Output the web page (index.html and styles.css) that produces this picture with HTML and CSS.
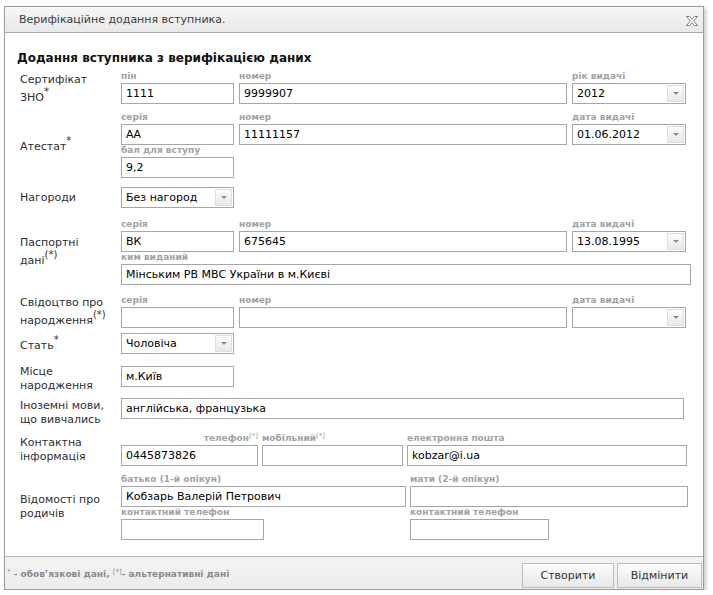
FILE: index.html
```html
<!DOCTYPE html>
<html lang="uk">
<head>
<meta charset="utf-8">
<title>Верифікаційне додання вступника</title>
<link rel="stylesheet" href="styles.css">
</head>
<body>
<div class="dialog">
  <div class="titlebar">
    <span class="title">Верифікаційне додання вступника.</span>
    <span class="close">
      <svg width="12" height="10" viewBox="0 0 12 10"><path d="M0.5 0.5H3.6L6 3.2L8.4 0.5H11.5L7.7 5L11.5 9.5H8.4L6 6.8L3.6 9.5H0.5L4.3 5Z" fill="#fff" stroke="#7d7d7d" stroke-width="1" stroke-linejoin="miter"/></svg>
    </span>
  </div>

  <div class="content">
    <h1 class="heading">Додання вступника з верифікацією даних</h1>
    <div class="form">

      <div class="row">
        <div class="label label-top">Сертифікат<br>ЗНО<sup>*</sup></div>
        <div class="fields">
          <div class="line">
            <div class="field w113"><div class="cap">пін</div><div class="input">1111</div></div>
            <div class="field w328"><div class="cap">номер</div><div class="input">9999907</div></div>
            <div class="field w114"><div class="cap">рік видачі</div><div class="select"><span class="select-text">2012</span><span class="select-btn"><i class="arrow"></i></span></div></div>
          </div>
        </div>
      </div>

      <div class="row mt7">
        <div class="label">Атестат<sup>*</sup></div>
        <div class="fields">
          <div class="line">
            <div class="field w113"><div class="cap">серія</div><div class="input">АА</div></div>
            <div class="field w328"><div class="cap">номер</div><div class="input">11111157</div></div>
            <div class="field w114"><div class="cap">дата видачі</div><div class="select"><span class="select-text">01.06.2012</span><span class="select-btn"><i class="arrow"></i></span></div></div>
          </div>
          <div class="line">
            <div class="field w113"><div class="cap">бал для вступу</div><div class="input">9,2</div></div>
          </div>
        </div>
      </div>

      <div class="row mt9">
        <div class="label">Нагороди</div>
        <div class="fields">
          <div class="select w113"><span class="select-text">Без нагород</span><span class="select-btn"><i class="arrow"></i></span></div>
        </div>
      </div>

      <div class="row mt11">
        <div class="label">Паспортні<br>дані<sup>(*)</sup></div>
        <div class="fields">
          <div class="line">
            <div class="field w113"><div class="cap">серія</div><div class="input">ВК</div></div>
            <div class="field w328"><div class="cap">номер</div><div class="input">675645</div></div>
            <div class="field w114"><div class="cap">дата видачі</div><div class="select"><span class="select-text">13.08.1995</span><span class="select-btn"><i class="arrow"></i></span></div></div>
          </div>
          <div class="line">
            <div class="field w570"><div class="cap">ким виданий</div><div class="input">Мінським РВ МВС України в м.Києві</div></div>
          </div>
        </div>
      </div>

      <div class="row mt10">
        <div class="label">Свідоцтво про<br>народження<sup>(*)</sup></div>
        <div class="fields">
          <div class="line">
            <div class="field w113"><div class="cap">серія</div><div class="input"></div></div>
            <div class="field w328"><div class="cap">номер</div><div class="input"></div></div>
            <div class="field w114"><div class="cap">дата видачі</div><div class="select"><span class="select-text"></span><span class="select-btn"><i class="arrow"></i></span></div></div>
          </div>
        </div>
      </div>

      <div class="row mt5">
        <div class="label">Стать<sup>*</sup></div>
        <div class="fields">
          <div class="select w113"><span class="select-text">Чоловіча</span><span class="select-btn"><i class="arrow"></i></span></div>
        </div>
      </div>

      <div class="row row-top mt11">
        <div class="label">Місце<br>народження</div>
        <div class="fields">
          <div class="input w113 nudge">м.Київ</div>
        </div>
      </div>

      <div class="row row-top mt5">
        <div class="label nudge">Іноземні мови,<br>що вивчались</div>
        <div class="fields">
          <div class="input w563">англійська, французька</div>
        </div>
      </div>

      <div class="row mt6">
        <div class="label">Контактна<br>інформація</div>
        <div class="fields">
          <div class="line tight">
            <div class="field w137"><div class="cap right">телефон<sup>[*]</sup></div><div class="input">0445873826</div></div>
            <div class="field w141"><div class="cap">мобільний<sup>[*]</sup></div><div class="input"></div></div>
            <div class="field w280"><div class="cap">електронна пошта</div><div class="input">kobzar@i.ua</div></div>
          </div>
        </div>
      </div>

      <div class="row mt8">
        <div class="label">Відомості про<br>родичів</div>
        <div class="fields parents">
          <div class="field">
            <div class="cap">батько (1-й опікун)</div>
            <div class="input w285">Кобзарь Валерій Петрович</div>
            <div class="cap">контактний телефон</div>
            <div class="input w143"></div>
          </div>
          <div class="field">
            <div class="cap">мати (2-й опікун)</div>
            <div class="input w278"></div>
            <div class="cap">контактний телефон</div>
            <div class="input w139"></div>
          </div>
        </div>
      </div>

    </div>
  </div>

  <div class="footer">
    <span class="note"><sup>*</sup> - обов’язкові дані, <sup>[*]</sup>- альтернативні дані</span>
    <span class="buttons">
      <button class="btn btn-create" type="button">Створити</button>
      <button class="btn btn-cancel" type="button">Відмінити</button>
    </span>
  </div>
</div>
</body>
</html>
```

FILE: styles.css
```css
* {
  box-sizing: border-box;
}

body {
  margin: 0;
  padding: 6px 0 0 4px;
  background: #fff;
  font-family: "DejaVu Sans", Verdana, sans-serif;
  font-size: 11px;
  color: #333;
}

.dialog {
  width: 700px;
  height: 584px;
  border: 1px solid #9c9c9c;
  background: #fff;
  display: flex;
  flex-direction: column;
  box-shadow: 2px 2px 4px rgba(0, 0, 0, 0.22);
}

.titlebar {
  height: 26px;
  flex: none;
  border-bottom: 1px solid #a9a9a9;
  background: linear-gradient(#f5f5f5, #e9e9e9);
  display: flex;
  align-items: center;
  justify-content: space-between;
  padding: 0 5px 0 14px;
}

.title {
  color: #3c3c3c;
  font-size: 11px;
}

.close {
  display: flex;
  width: 12px;
  height: 10px;
  margin-top: 2px;
}

.content {
  flex: 1;
  padding: 17px 0 0 12px;
}

.heading {
  margin: 0;
  font-size: 12px;
  font-weight: bold;
  line-height: 16px;
  color: #111;
}

.form {
  margin-top: 4px;
  padding-left: 3px;
  display: flex;
  flex-direction: column;
}

.row {
  display: grid;
  grid-template-columns: 101px auto;
  align-items: center;
}

.row-top {
  align-items: start;
}

.mt5 { margin-top: 5px; }
.mt6 { margin-top: 6px; }
.mt7 { margin-top: 7px; }
.mt8 { margin-top: 8px; }
.mt9 { margin-top: 9px; }
.mt10 { margin-top: 10px; }
.mt11 { margin-top: 11px; }

.label {
  line-height: 14px;
  color: #2e2e2e;
}

.label-top {
  align-self: start;
  padding-top: 3px;
}

.label sup {
  font-size: 10px;
  line-height: 10px;
  vertical-align: 6px;
}

.nudge {
  margin-top: 1px;
}

.fields {
  display: flex;
  flex-direction: column;
}

.line {
  display: flex;
  gap: 5px;
}

.line.tight {
  gap: 4px;
}

.parents {
  display: grid;
  grid-template-columns: 285px 278px;
  column-gap: 4px;
}

.field {
  display: flex;
  flex-direction: column;
}

.cap {
  height: 11px;
  line-height: 11px;
  margin-bottom: 1px;
  font-size: 9px;
  font-weight: bold;
  color: #a2a2a2;
  white-space: nowrap;
}

.cap.right {
  text-align: right;
}

.cap sup {
  font-size: 7px;
  font-weight: normal;
  line-height: 0;
  vertical-align: 3px;
}

.input {
  height: 21px;
  border: 1px solid #a6a6a6;
  padding: 0 4px;
  line-height: 19px;
  font-size: 11px;
  color: #000;
  background: #fff;
  white-space: nowrap;
  overflow: hidden;
}

.select {
  height: 21px;
  border: 1px solid #a6a6a6;
  background: #fff;
  display: flex;
}

.select-text {
  flex: 1;
  padding: 0 4px;
  line-height: 19px;
  font-size: 11px;
  color: #000;
  white-space: nowrap;
  overflow: hidden;
}

.select-btn {
  width: 17px;
  margin: 1px;
  border: 1px solid #dedede;
  background: linear-gradient(#fafafa, #e9e9e9);
  display: flex;
  align-items: center;
  justify-content: center;
}

.arrow {
  width: 0;
  height: 0;
  border-left: 3px solid transparent;
  border-right: 3px solid transparent;
  border-top: 3px solid #8c8c8c;
}

.w113 { width: 113px; }
.w114 { width: 114px; }
.w328 { width: 328px; }
.w570 { width: 570px; }
.w563 { width: 563px; }
.w137 { width: 137px; }
.w141 { width: 141px; }
.w280 { width: 280px; }
.w285 { width: 285px; }
.w278 { width: 278px; }
.w143 { width: 143px; }
.w139 { width: 139px; }

.footer {
  height: 33px;
  flex: none;
  border-top: 1px solid #b3b3b3;
  background: linear-gradient(#f3f3f3, #ececec);
  display: flex;
  align-items: flex-start;
  justify-content: space-between;
  padding: 6px 1px 0 2px;
}

.note {
  line-height: 22px;
  font-size: 9px;
  font-weight: bold;
  color: #8a8a8a;
  white-space: nowrap;
}

.note sup {
  font-size: 7px;
  font-weight: normal;
  line-height: 0;
  vertical-align: 3px;
}

.buttons {
  display: flex;
  gap: 3px;
}

.btn {
  height: 25px;
  margin: 0;
  padding: 0;
  border: 1px solid #bdbdbd;
  background: linear-gradient(#fcfcfc, #e8e8e8);
  font-family: "DejaVu Sans", Verdana, sans-serif;
  font-size: 11px;
  color: #333;
}

.btn-create { width: 92px; }
.btn-cancel { width: 85px; }
```
